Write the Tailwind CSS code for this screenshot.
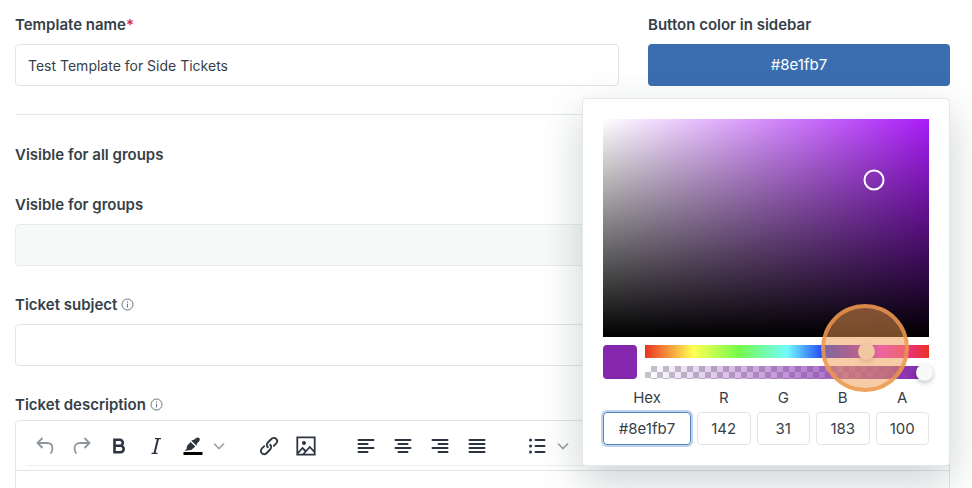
<!DOCTYPE html>
<html lang="en">
<head>
    <meta charset="UTF-8">
    <meta name="viewport" content="width=device-width, initial-scale=1">
    <title>Ticket template</title>
    <script src="https://cdn.jsdelivr.net/npm/@tailwindcss/browser@4"></script>
</head>
<body class="bg-white overflow-hidden font-[Inter,sans-serif] text-[15px] leading-[22px] text-[#363f47]">
    <form class="flex flex-col gap-7 pt-3.5 pl-[15px] pr-[22px]">
        <!-- Name and color -->
        <div class="grid grid-cols-[2fr_1fr] gap-[29px]">
            <div>
                <label for="name" class="block mb-2 font-semibold">Template name<span class="text-[#d32f3f]">*</span></label>
                <input id="name" type="text" value="Test Template for Side Tickets" class="block w-full h-[42px] px-3 border border-[#e2e5e6] rounded text-sm">
            </div>
            <div class="relative">
                <label for="color" class="block mb-2 font-semibold">Button color in sidebar</label>
                <button id="color" type="button" class="block w-full h-[42px] rounded bg-[#3a6eb0] text-white">#8e1fb7</button>

                <!-- Color picker -->
                <div class="absolute z-10 top-full right-0 mt-3 w-[368px] p-5 border border-[#e3e7e8] rounded bg-white shadow-[0_16px_44px_rgba(40,65,70,0.24)]">
                    <div class="relative h-[218px] bg-[linear-gradient(to_top,#000,transparent),linear-gradient(to_right,#fff,transparent)] bg-[#a91cf8]">
                        <span class="absolute left-[83%] top-[28%] size-[21px] -translate-x-1/2 -translate-y-1/2 rounded-full border-2 border-white"></span>
                    </div>

                    <div class="flex gap-2 mt-2">
                        <div class="size-[34px] shrink-0 rounded bg-[#8427ad]"></div>
                        <div class="flex flex-1 flex-col justify-between">
                            <div class="relative h-[13px] bg-[linear-gradient(to_right,#ea3323_0%,#ffff54_17%,#75fb4c_33%,#73fbfd_50%,#1a35f5_64%,#5a2fd0_71%,#ea33f7_83%,#ea3323_100%)]">
                                <input type="range" min="0" max="360" value="284" aria-label="Hue" class="absolute -inset-x-1 inset-y-0 appearance-none bg-transparent [&::-webkit-slider-thumb]:appearance-none [&::-webkit-slider-thumb]:size-[17px] [&::-webkit-slider-thumb]:rounded-full [&::-webkit-slider-thumb]:bg-[#f4f6f6] [&::-webkit-slider-thumb]:shadow-[0_2px_5px_rgba(0,0,0,0.25)]">
                                <span class="pointer-events-none absolute left-[77.5%] top-1/2 -mt-1 size-[88px] -translate-x-1/2 -translate-y-1/2 rounded-full border-4 border-[#ee974d]/80 bg-[#ee974d]/50"></span>
                            </div>
                            <div class="relative -z-10 h-[13px] bg-[linear-gradient(to_right,transparent,#8427ad),repeating-conic-gradient(#c3c6ca_0_25%,#fff_0_50%)] bg-size-[100%_100%,12px_12px]">
                                <input type="range" min="0" max="100" value="100" aria-label="Alpha" class="absolute -inset-x-1 inset-y-0 appearance-none bg-transparent [&::-webkit-slider-thumb]:appearance-none [&::-webkit-slider-thumb]:size-[17px] [&::-webkit-slider-thumb]:rounded-full [&::-webkit-slider-thumb]:bg-[#f8f9f9] [&::-webkit-slider-thumb]:shadow-[0_2px_5px_rgba(0,0,0,0.25)]">
                            </div>
                        </div>
                    </div>

                    <div class="grid grid-cols-[88px_repeat(4,1fr)] gap-x-1.5 gap-y-[3px] mt-2 text-center">
                        <label for="hex">Hex</label>
                        <label for="r">R</label>
                        <label for="g">G</label>
                        <label for="b">B</label>
                        <label for="a">A</label>
                        <input id="hex" type="text" value="#8e1fb7" class="w-full h-[33px] text-center border border-[#5a82b5] rounded ring-2 ring-[#bdd2ec]">
                        <input id="r" type="text" value="142" class="w-full h-[33px] text-center border border-[#e2e5e6] rounded">
                        <input id="g" type="text" value="31" class="w-full h-[33px] text-center border border-[#e2e5e6] rounded">
                        <input id="b" type="text" value="183" class="w-full h-[33px] text-center border border-[#e2e5e6] rounded">
                        <input id="a" type="text" value="100" class="w-full h-[33px] text-center border border-[#e2e5e6] rounded">
                    </div>
                </div>
            </div>
        </div>

        <hr class="mb-px border-[#e6e8e9]">

        <!-- Groups -->
        <div class="font-semibold">Visible for all groups</div>
        <div>
            <label for="groups" class="block mb-2 font-semibold">Visible for groups</label>
            <input id="groups" type="text" disabled class="block w-full h-[42px] px-3 border border-[#e8ebeb] rounded bg-[#f8f9f9]">
        </div>

        <!-- Ticket -->
        <div>
            <label for="subject" class="flex items-center gap-1 mb-2 font-semibold">
                Ticket subject
                <svg class="size-[13px] -mt-0.5" viewBox="0 0 13 13" fill="none" stroke="#68737d">
                    <circle cx="6.5" cy="6.5" r="5.5" />
                    <path d="M6.5 5.8v3.7M6.5 3.3v1.3" />
                </svg>
            </label>
            <input id="subject" type="text" class="block w-full h-[42px] px-3 border border-[#e2e5e6] rounded">
        </div>
        <div>
            <label for="description" class="flex items-center gap-1 mb-1 font-semibold">
                Ticket description
                <svg class="size-[13px] -mt-0.5" viewBox="0 0 13 13" fill="none" stroke="#68737d">
                    <circle cx="6.5" cy="6.5" r="5.5" />
                    <path d="M6.5 5.8v3.7M6.5 3.3v1.3" />
                </svg>
            </label>
            <div class="border border-[#e2e5e6] rounded">
                <div class="pl-2.5 pb-1 border-b border-[#e2e5e6]">
                    <div class="flex gap-[23px] pt-[7px] pb-px border-b border-[#eef0f0] text-[#2b3440]">
                        <div class="flex">
                            <button type="button" aria-label="Undo" class="w-[37px] h-9 flex items-center justify-center text-[#8e959d]">
                                <svg class="size-5" viewBox="0 0 20 20" fill="none" stroke="currentColor" stroke-width="1.8"><path d="M7.5 2 2.5 7l5 5M2.5 7H12c3.500 0 5.500 2.300 5.500 5.300 0 2-.8 3.700-1.800 5.200" /></svg>
                            </button>
                            <button type="button" aria-label="Redo" class="w-[37px] h-9 flex items-center justify-center text-[#8e959d]">
                                <svg class="size-5" viewBox="0 0 20 20" fill="none" stroke="currentColor" stroke-width="1.8"><path d="m12.500 2 5 5-5 5M17.500 7H8c-3.500 0-5.500 2.300-5.500 5.300 0 2 .8 3.700 1.800 5.200" /></svg>
                            </button>
                            <button type="button" aria-label="Bold" class="w-[37px] h-9 flex items-center justify-center">
                                <svg class="size-5" viewBox="0 0 20 20" fill="none" stroke="currentColor" stroke-width="2.6"><path d="M5.500 3.800h5.300a3 3 0 0 1 0 6H5.500zM5.500 9.800h6a3.200 3.200 0 0 1 0 6.400h-6z" /></svg>
                            </button>
                            <button type="button" aria-label="Italic" class="w-[37px] h-9 flex items-center justify-center">
                                <svg class="size-5" viewBox="0 0 20 20" fill="none" stroke="currentColor"><path stroke-width="1.300" d="M9 2.700h6M5.500 17.300h6" /><path stroke-width="2" d="M12 2.700 8.500 17.300" /></svg>
                            </button>
                            <button type="button" aria-label="Text color" class="w-[37px] h-9 flex items-center justify-center">
                                <svg class="size-5" viewBox="0 0 20 20" fill="currentColor"><path d="M12.200 2.800c1.500-1.500 3-1.800 4-.9s.8 2.600-.7 4.100l-1.800 1.700.4.900-.9.900-4.800-4.700.9-.9.900.4zM7.600 5.900l4.700 4.600-4 3.500-4.500.6-2.300.6 2-2.200.6-3.300z" /><path fill="#000" d="M.5 16h19v3H.5z" /></svg>
                            </button>
                            <button type="button" aria-label="More colors" class="w-4 h-9 flex items-center justify-center text-[#9aa1a8]">
                                <svg class="w-3 h-3" viewBox="0 0 12 12" fill="none" stroke="currentColor" stroke-width="1.600"><path d="m1 3.500 5 5 5-5" /></svg>
                            </button>
                        </div>
                        <div class="flex">
                            <button type="button" aria-label="Link" class="w-[37px] h-9 flex items-center justify-center">
                                <svg class="size-5" viewBox="0 0 20 20" fill="none" stroke="currentColor" stroke-width="1.800" stroke-linecap="round"><path d="M8.900 11.300c-1.600-1.300-1.500-3.300 0-4.800l3.400-3.500c1.500-1.500 3.600-1.500 4.900-.2s1.300 3.400-.2 4.900l-2.200 2.200M11.100 8.700c1.600 1.300 1.500 3.300 0 4.800L7.700 17c-1.500 1.500-3.600 1.500-4.900.2s-1.300-3.400.2-4.900l2.200-2.200" /></svg>
                            </button>
                            <button type="button" aria-label="Image" class="w-[37px] h-9 flex items-center justify-center">
                                <svg class="size-5" viewBox="0 0 20 20" fill="none" stroke="currentColor" stroke-width="1.800"><path d="M1.300 1.300h17.400v17.400H1.300zM2 17l4.500-5 3 3M7 18.500l6.800-7.500 4.700 5" /><circle cx="8" cy="7" r="2" fill="currentColor" stroke="none" /></svg>
                            </button>
                        </div>
                        <div class="flex">
                            <button type="button" aria-label="Align left" class="w-[37px] h-9 flex items-center justify-center">
                                <svg class="size-5" viewBox="0 0 20 20" fill="none" stroke="currentColor" stroke-width="2" stroke-linecap="round"><path d="M2.500 4h15M2.500 8h9M2.500 12h15M2.500 16h9" /></svg>
                            </button>
                            <button type="button" aria-label="Align center" class="w-[37px] h-9 flex items-center justify-center">
                                <svg class="size-5" viewBox="0 0 20 20" fill="none" stroke="currentColor" stroke-width="2" stroke-linecap="round"><path d="M2.500 4h15M5.500 8h9M2.500 12h15M5.500 16h9" /></svg>
                            </button>
                            <button type="button" aria-label="Align right" class="w-[37px] h-9 flex items-center justify-center">
                                <svg class="size-5" viewBox="0 0 20 20" fill="none" stroke="currentColor" stroke-width="2" stroke-linecap="round"><path d="M2.500 4h15M8.500 8h9M2.500 12h15M8.500 16h9" /></svg>
                            </button>
                            <button type="button" aria-label="Justify" class="w-[37px] h-9 flex items-center justify-center">
                                <svg class="size-5" viewBox="0 0 20 20" fill="none" stroke="currentColor" stroke-width="2" stroke-linecap="round"><path d="M2.500 4h15M2.500 8h15M2.500 12h15M2.500 16h15" /></svg>
                            </button>
                        </div>
                        <div class="flex">
                            <button type="button" aria-label="Bullet list" class="w-[37px] h-9 flex items-center justify-center">
                                <svg class="size-5" viewBox="0 0 20 20" fill="none" stroke="currentColor" stroke-width="2" stroke-linecap="round"><path d="M8.500 4h9M8.500 10h9M8.500 16h9" /><path stroke-width="3" d="M3.500 4h0M3.500 10h0M3.500 16h0" /></svg>
                            </button>
                            <button type="button" aria-label="List styles" class="w-4 h-9 flex items-center justify-center text-[#9aa1a8]">
                                <svg class="w-3 h-3" viewBox="0 0 12 12" fill="none" stroke="currentColor" stroke-width="1.600"><path d="m1 3.500 5 5 5-5" /></svg>
                            </button>
                        </div>
                    </div>
                </div>
                <textarea id="description" rows="6" class="block w-full p-3 resize-none"></textarea>
            </div>
        </div>
    </form>
</body>
</html>
